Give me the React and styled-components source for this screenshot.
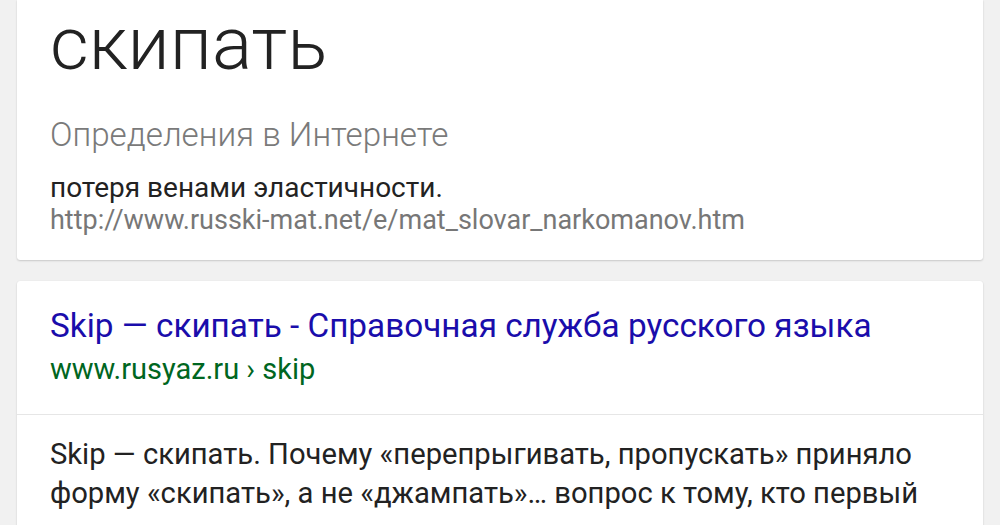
import React from "react";
import styled, { createGlobalStyle } from "styled-components";

const Global = createGlobalStyle`
  html, body { margin: 0; padding: 0; background: #f1f1f1; }
  body { font-family: Roboto, "Noto Sans", Arial, sans-serif; }
`;

const Page = styled.div`
  display: flex;
  flex-direction: column;
  gap: 21px;
  padding: 0 17px;
  height: 525px;
  overflow: hidden;
`;

const Card = styled.section`
  background: #fff;
  border-radius: ${(p) => (p.$top ? "0 0 3px 3px" : "3px")};
  box-shadow: 0 1px 2px rgba(0, 0, 0, 0.16), 0 0 1px rgba(0, 0, 0, 0.08);
  flex-shrink: 0;
`;

const Block = styled.div`
  padding: ${(p) => p.$pad || "0 33px"};
`;

const Word = styled.h1`
  margin: 0;
  font-size: 75px;
  line-height: 80px;
  font-weight: 300;
  color: #222;
`;

const Label = styled.div`
  margin-top: 34px;
  font-size: 33.2px;
  line-height: 36px;
  font-weight: 300;
  color: #7a7a7a;
`;

const Definition = styled.div`
  margin-top: 19px;
  font-size: 28px;
  line-height: 32px;
  color: #222;
`;

const Source = styled.div`
  font-size: 27px;
  line-height: 32px;
  color: #777;
`;

const Title = styled.a`
  display: block;
  font-size: 33.3px;
  line-height: 36px;
  color: #1a0dab;
  text-decoration: none;
`;

const Url = styled.div`
  margin-top: 10px;
  font-size: 29px;
  line-height: 30px;
  color: #006621;
`;

const Divider = styled.hr`
  margin: 0;
  border: 0;
  border-top: 1px solid #e6e6e6;
`;

const Snippet = styled.p`
  margin: 0;
  font-size: 29.2px;
  line-height: 39px;
  color: #222;
`;

export default function App() {
  return (
    <>
      <Global />
      <Page>
        <Card $top>
          <Block $pad="3px 33px 24px">
            <Word>скипать</Word>
            <Label>Определения в Интернете</Label>
            <Definition>потеря венами эластичности.</Definition>
            <Source>http://www.russki-mat.net/e/mat_slovar_narkomanov.htm</Source>
          </Block>
        </Card>
        <Card>
          <Block $pad="27px 33px 30px">
            <Title href="#">Skip — скипать - Справочная служба русского языка</Title>
            <Url>www.rusyaz.ru › skip</Url>
          </Block>
          <Divider />
          <Block $pad="20px 33px 20px">
            <Snippet>
              Skip — скипать. Почему «перепрыгивать, пропускать» приняло
              форму «скипать», а не «джампать»… вопрос к тому, кто первый
              так сказал.
            </Snippet>
          </Block>
        </Card>
      </Page>
    </>
  );
}
